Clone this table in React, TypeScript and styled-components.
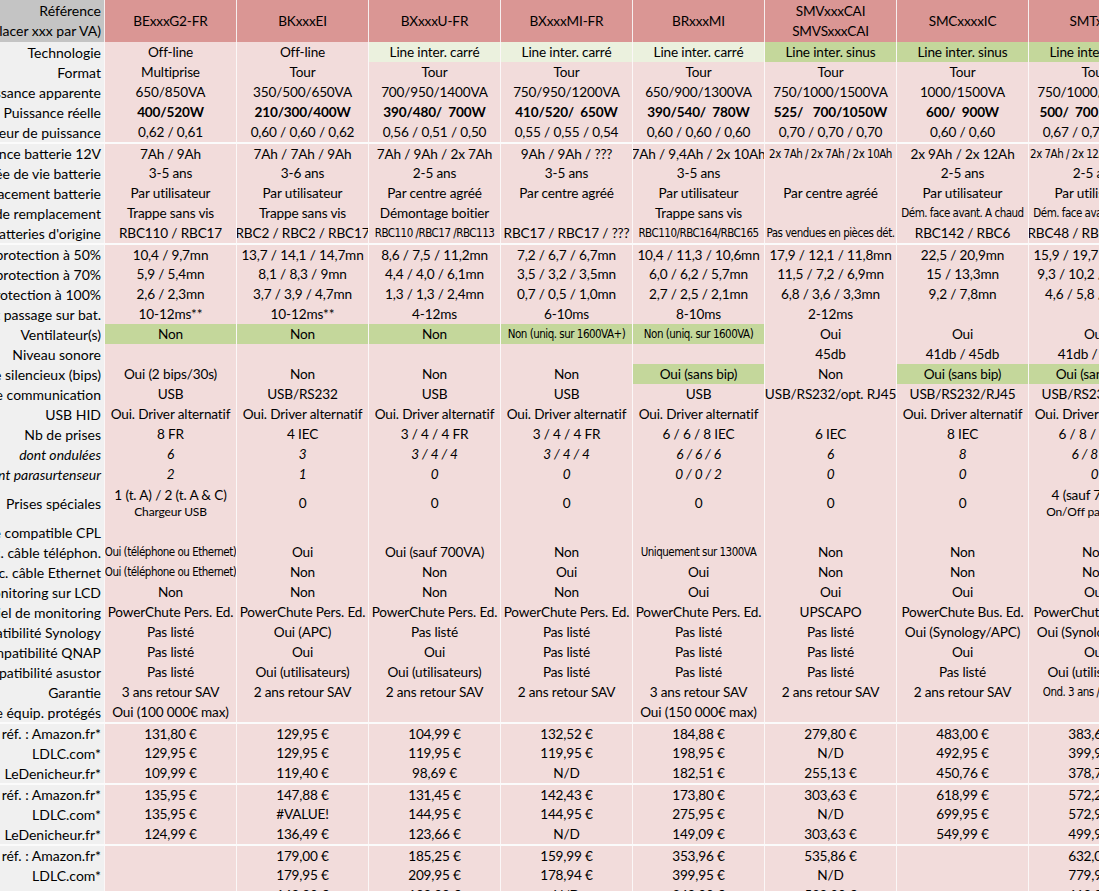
import styled, { createGlobalStyle } from 'styled-components';

const GlobalStyle = createGlobalStyle`
  html, body {
    margin: 0;
    padding: 0;
    background: #ffffff;
    overflow: hidden;
  }
`;

const COLS = '104px repeat(8, 132px)';

const Sheet = styled.div`
  width: 1099px;
  height: 891px;
  overflow: hidden;
  font-family: Lato, 'Liberation Sans', sans-serif;
  font-size: 13.6px;
  letter-spacing: -0.15px;
  color: #000;
`;

const Table = styled.div`
  width: max-content;
`;

const HeaderRow = styled.div`
  display: grid;
  grid-template-columns: ${COLS};
  height: 42px;
`;

const HeaderLabel = styled.div`
  background: #c4c4c4;
  display: flex;
  flex-direction: column;
  align-items: flex-end;
  justify-content: center;
  overflow: hidden;
  padding-right: 3px;
  line-height: 20px;
  white-space: nowrap;
  font-size: 14px;
  letter-spacing: 0;
`;

const HeaderCell = styled.div`
  background: #da9694;
  border-left: 1px solid #f6eeee;
  display: flex;
  flex-direction: column;
  align-items: center;
  justify-content: center;
  line-height: 20px;
  white-space: nowrap;
  overflow: hidden;
`;

const Row = styled.div<{ $sep?: boolean; $tall?: boolean }>`
  display: grid;
  grid-template-columns: ${COLS};
  box-sizing: border-box;
  height: ${(p) => (p.$tall ? 38 : 20) + (p.$sep ? 1 : 0)}px;
  border-top: ${(p) => (p.$sep ? '2px solid #fbfbfb' : 'none')};
`;

const Label = styled.div<{ $italic?: boolean }>`
  background: #f0f0f0;
  display: flex;
  align-items: center;
  justify-content: flex-end;
  padding-right: 3px;
  overflow: hidden;
  white-space: nowrap;
  font-size: 14px;
  letter-spacing: 0;
  font-style: ${(p) => (p.$italic ? 'italic' : 'normal')};
`;

const tones: Record<string, string> = {
  pink: '#f2dcdb',
  g: '#c4d79b',
  lg: '#ebf1de',
};

const Cell = styled.div<{ $tone: string; $italic?: boolean; $bold?: boolean }>`
  background: ${(p) => tones[p.$tone]};
  border-left: 1px solid #fbf7f7;
  display: flex;
  flex-direction: column;
  align-items: center;
  justify-content: center;
  overflow: hidden;
  white-space: pre;
  font-style: ${(p) => (p.$italic ? 'italic' : 'normal')};
  font-weight: ${(p) => (p.$bold ? 700 : 400)};
`;

const Narrow = styled.span`
  font-family: 'Liberation Sans Narrow', 'DejaVu Sans Condensed', sans-serif;
  font-size: 11.5px;
  letter-spacing: -0.5px;
`;

const MainLine = styled.span`
  line-height: 18px;
`;

const Sub = styled.span`
  font-size: 12px;
  line-height: 16px;
`;

type CellValue = string | { t: string; tone?: 'g' | 'lg'; n?: boolean; sub?: string };

type RowDef = {
  label: string;
  cells: CellValue[];
  sep?: boolean;
  tall?: boolean;
  italic?: boolean;
  bold?: boolean;
};

const headers = ['BExxxG2-FR', 'BKxxxEI', 'BXxxxU-FR', 'BXxxxMI-FR', 'BRxxxMI', 'SMVxxxCAI\nSMVSxxxCAI', 'SMCxxxxIC', 'SMTxxxI'];

const lg = (t: string): CellValue => ({ t, tone: 'lg' });
const g = (t: string): CellValue => ({ t, tone: 'g' });
const n = (t: string, tone?: 'g' | 'lg'): CellValue => ({ t, n: true, tone });

const rows: RowDef[] = [
  { label: 'Technologie', cells: ['Off-line', 'Off-line', lg('Line inter. carré'), lg('Line inter. carré'), lg('Line inter. carré'), g('Line inter. sinus'), g('Line inter. sinus'), g('Line inter. sinus')] },
  { label: 'Format', cells: ['Multiprise', 'Tour', 'Tour', 'Tour', 'Tour', 'Tour', 'Tour', 'Tour'] },
  { label: 'Puissance apparente', cells: ['650/850VA', '350/500/650VA', '700/950/1400VA', '750/950/1200VA', '650/900/1300VA', '750/1000/1500VA', '1000/1500VA', '750/1000/1500VA'] },
  { label: 'Puissance réelle', bold: true, cells: ['400/520W', '210/300/400W', '390/480/  700W', '410/520/  650W', '390/540/  780W', '525/   700/1050W', '600/  900W', '500/  700/1000W'] },
  { label: 'Facteur de puissance', cells: ['0,62 / 0,61', '0,60 / 0,60 / 0,62', '0,56 / 0,51 / 0,50', '0,55 / 0,55 / 0,54', '0,60 / 0,60 / 0,60', '0,70 / 0,70 / 0,70', '0,60 / 0,60', '0,67 / 0,70 / 0,67'] },
  { label: 'Puissance batterie 12V', sep: true, cells: ['7Ah / 9Ah', '7Ah / 7Ah / 9Ah', '7Ah / 9Ah / 2x 7Ah', '9Ah / 9Ah / ???', '7Ah / 9,4Ah / 2x 10Ah', n('2x 7Ah / 2x 7Ah / 2x 10Ah'), '2x 9Ah / 2x 12Ah', n('2x 7Ah / 2x 12Ah / 2x 18Ah')] },
  { label: 'Durée de vie batterie', cells: ['3-5 ans', '3-6 ans', '2-5 ans', '3-5 ans', '3-5 ans', '', '2-5 ans', '2-5 ans'] },
  { label: 'Remplacement batterie', cells: ['Par utilisateur', 'Par utilisateur', 'Par centre agréé', 'Par centre agréé', 'Par utilisateur', 'Par centre agréé', 'Par utilisateur', 'Par utilisateur'] },
  { label: 'Mode de remplacement', cells: ['Trappe sans vis', 'Trappe sans vis', 'Démontage boitier', '', 'Trappe sans vis', '', n('Dém. face avant. A chaud'), n('Dém. face avant. A chaud')] },
  { label: "Batteries d'origine", cells: ['RBC110 / RBC17', 'RBC2 / RBC2 / RBC17', n('RBC110 /RBC17 /RBC113'), 'RBC17 / RBC17 / ???', n('RBC110/RBC164/RBC165'), n('Pas vendues en pièces dét.'), 'RBC142 / RBC6', 'RBC48 / RBC6 / RBC7'] },
  { label: 'Autonomie protection à 50%', sep: true, cells: ['10,4 / 9,7mn', '13,7 / 14,1 / 14,7mn', '8,6 / 7,5 / 11,2mn', '7,2 / 6,7 / 6,7mn', '10,4 / 11,3 / 10,6mn', '17,9 / 12,1 / 11,8mn', '22,5 / 20,9mn', '15,9 / 19,7 / 22,1mn'] },
  { label: 'Autonomie protection à 70%', cells: ['5,9 / 5,4mn', '8,1 / 8,3 / 9mn', '4,4 / 4,0 / 6,1mn', '3,5 / 3,2 / 3,5mn', '6,0 / 6,2 / 5,7mn', '11,5 / 7,2 / 6,9mn', '15 / 13,3mn', '9,3 / 10,2 / 13,2mn'] },
  { label: 'Autonomie protection à 100%', cells: ['2,6 / 2,3mn', '3,7 / 3,9 / 4,7mn', '1,3 / 1,3 / 2,4mn', '0,7 / 0,5 / 1,0mn', '2,7 / 2,5 / 2,1mn', '6,8 / 3,6 / 3,3mn', '9,2 / 7,8mn', '4,6 / 5,8 / 7,7mn'] },
  { label: 'Temps de basculement passage sur bat.', cells: ['10-12ms**', '10-12ms**', '4-12ms', '6-10ms', '8-10ms', '2-12ms', '', ''] },
  { label: 'Ventilateur(s)', cells: [g('Non'), g('Non'), g('Non'), n('Non (uniq. sur 1600VA+)', 'g'), n('Non (uniq. sur 1600VA)', 'g'), 'Oui', 'Oui', 'Oui'] },
  { label: 'Niveau sonore', cells: ['', '', '', '', '', '45db', '41db / 45db', '41db / 45db'] },
  { label: 'Mode silencieux (bips)', cells: ['Oui (2 bips/30s)', 'Non', 'Non', 'Non', g('Oui (sans bip)'), 'Non', g('Oui (sans bip)'), g('Oui (sans bip)')] },
  { label: 'Port de communication', cells: ['USB', 'USB/RS232', 'USB', 'USB', 'USB', 'USB/RS232/opt. RJ45', 'USB/RS232/RJ45', 'USB/RS232/RJ45'] },
  { label: 'USB HID', cells: ['Oui. Driver alternatif', 'Oui. Driver alternatif', 'Oui. Driver alternatif', 'Oui. Driver alternatif', 'Oui. Driver alternatif', '', 'Oui. Driver alternatif', 'Oui. Driver alternatif'] },
  { label: 'Nb de prises', cells: ['8 FR', '4 IEC', '3 / 4 / 4 FR', '3 / 4 / 4 FR', '6 / 6 / 8 IEC', '6 IEC', '8 IEC', '6 / 8 / 8 IEC'] },
  { label: 'dont ondulées', italic: true, cells: ['6', '3', '3 / 4 / 4', '3 / 4 / 4', '6 / 6 / 6', '6', '8', '6 / 8 / 8'] },
  { label: 'dont parasurtenseur', italic: true, cells: ['2', '1', '0', '0', '0 / 0 / 2', '0', '0', '0'] },
  { label: 'Prises spéciales', tall: true, cells: [{ t: '1 (t. A) / 2 (t. A & C)', sub: 'Chargeur USB' }, '0', '0', '0', '0', '0', '0', { t: '4 (sauf 750VA)', sub: 'On/Off par groupe' }] },
  { label: 'Prise compatible CPL', cells: ['', '', '', '', '', '', '', ''] },
  { label: 'Protec. câble téléphon.', cells: [n('Oui (téléphone ou Ethernet)'), 'Oui', 'Oui (sauf 700VA)', 'Non', n('Uniquement sur 1300VA'), 'Non', 'Non', 'Non'] },
  { label: 'Protec. câble Ethernet', cells: [n('Oui (téléphone ou Ethernet)'), 'Non', 'Non', 'Oui', 'Oui', 'Non', 'Non', 'Non'] },
  { label: 'Monitoring sur LCD', cells: ['Non', 'Non', 'Non', 'Non', 'Oui', 'Oui', 'Oui', 'Oui'] },
  { label: 'Logiciel de monitoring', cells: ['PowerChute Pers. Ed.', 'PowerChute Pers. Ed.', 'PowerChute Pers. Ed.', 'PowerChute Pers. Ed.', 'PowerChute Pers. Ed.', 'UPSCAPO', 'PowerChute Bus. Ed.', 'PowerChute Bus. Ed.'] },
  { label: 'Compatibilité Synology', cells: ['Pas listé', 'Oui (APC)', 'Pas listé', 'Pas listé', 'Pas listé', 'Pas listé', 'Oui (Synology/APC)', 'Oui (Synology/APC)'] },
  { label: 'Compatibilité QNAP', cells: ['Pas listé', 'Oui', 'Oui', 'Pas listé', 'Pas listé', 'Pas listé', 'Oui', 'Oui'] },
  { label: 'Compatibilité asustor', cells: ['Pas listé', 'Oui (utilisateurs)', 'Oui (utilisateurs)', 'Pas listé', 'Pas listé', 'Pas listé', 'Pas listé', 'Oui (utilisateurs)'] },
  { label: 'Garantie', cells: ['3 ans retour SAV', '2 ans retour SAV', '2 ans retour SAV', '2 ans retour SAV', '3 ans retour SAV', '2 ans retour SAV', '2 ans retour SAV', n('Ond. 3 ans /bat. 2 ans')] },
  { label: 'Assurance équip. protégés', cells: ['Oui (100 000€ max)', '', '', '', 'Oui (150 000€ max)', '', '', ''] },
  { label: 'Prix min réf. : Amazon.fr*', sep: true, cells: ['131,80 €', '129,95 €', '104,99 €', '132,52 €', '184,88 €', '279,80 €', '483,00 €', '383,60 €'] },
  { label: 'LDLC.com*', cells: ['129,95 €', '129,95 €', '119,95 €', '119,95 €', '198,95 €', 'N/D', '492,95 €', '399,95 €'] },
  { label: 'LeDenicheur.fr*', cells: ['109,99 €', '119,40 €', '98,69 €', 'N/D', '182,51 €', '255,13 €', '450,76 €', '378,70 €'] },
  { label: 'Prix moy. réf. : Amazon.fr*', sep: true, cells: ['135,95 €', '147,88 €', '131,45 €', '142,43 €', '173,80 €', '303,63 €', '618,99 €', '572,29 €'] },
  { label: 'LDLC.com*', cells: ['135,95 €', '#VALUE!', '144,95 €', '144,95 €', '275,95 €', 'N/D', '699,95 €', '572,95 €'] },
  { label: 'LeDenicheur.fr*', cells: ['124,99 €', '136,49 €', '123,66 €', 'N/D', '149,09 €', '303,63 €', '549,99 €', '499,90 €'] },
  { label: 'Prix max réf. : Amazon.fr*', sep: true, cells: ['', '179,00 €', '185,25 €', '159,99 €', '353,96 €', '535,86 €', '', '632,00 €'] },
  { label: 'LDLC.com*', cells: ['', '179,95 €', '209,95 €', '178,94 €', '399,95 €', 'N/D', '', '779,95 €'] },
  { label: 'LeDenicheur.fr*', cells: ['', '169,90 €', '199,99 €', 'N/D', '349,00 €', '529,00 €', '', '619,90 €'] },
];

const renderCell = (v: CellValue, i: number, row: RowDef) => {
  const c = typeof v === 'string' ? { t: v } : v;
  return (
    <Cell key={i} $tone={c.tone ?? 'pink'} $italic={row.italic} $bold={row.bold}>
      {c.n ? <Narrow>{c.t}</Narrow> : c.sub ? <MainLine>{c.t}</MainLine> : c.t}
      {c.sub && <Sub>{c.sub}</Sub>}
    </Cell>
  );
};

const App = () => {
  return (
    <Sheet>
      <GlobalStyle />
      <Table>
        <HeaderRow>
          <HeaderLabel>
            <span>Référence</span>
            <span>(remplacer xxx par VA)</span>
          </HeaderLabel>
          {headers.map((h) => (
            <HeaderCell key={h}>
              {h.split('\n').map((line) => (
                <span key={line}>{line}</span>
              ))}
            </HeaderCell>
          ))}
        </HeaderRow>
        {rows.map((row, ri) => (
          <Row key={ri} $sep={row.sep} $tall={row.tall}>
            <Label $italic={row.italic}>{row.label}</Label>
            {row.cells.map((v, i) => renderCell(v, i, row))}
          </Row>
        ))}
      </Table>
    </Sheet>
  );
};

export default App;
